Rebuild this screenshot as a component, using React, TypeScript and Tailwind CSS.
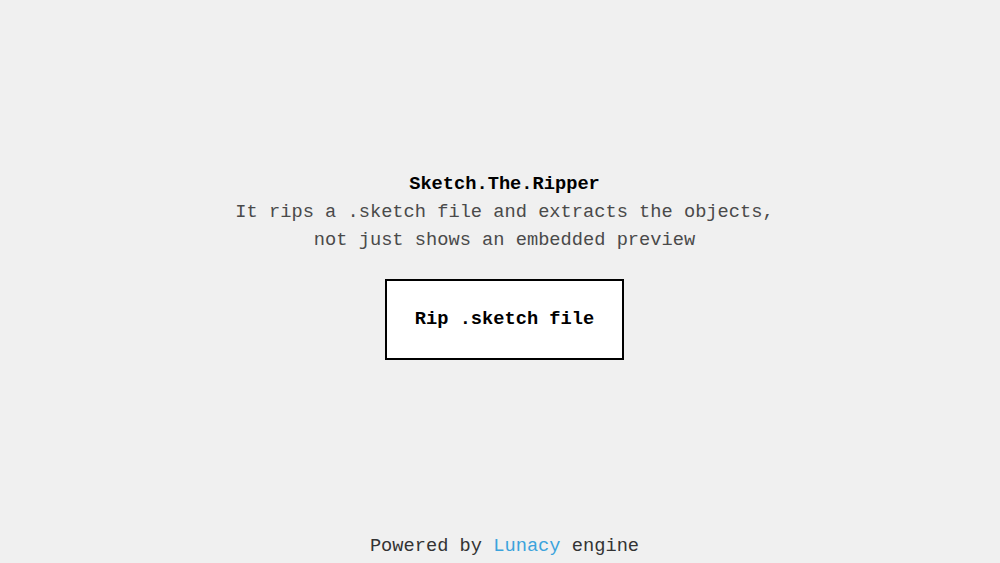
export default function App() {
  return (
    <div
      className="flex h-[563px] w-full flex-col bg-[#f0f0f0] pl-[9px] text-[18.7px] text-[#333]"
      style={{ fontFamily: '"Liberation Mono", "Courier New", monospace' }}
    >
      <main className="flex flex-1 flex-col items-center justify-center pt-[2px]">
        <h1 className="font-bold leading-[28px] text-black">Sketch.The.Ripper</h1>
        <p className="text-center leading-[28px] text-[#4a4a4a]">
          It rips a .sketch file and extracts the objects,
          <br />
          not just shows an embedded preview
        </p>
        <button className="mt-[25px] flex h-[81px] w-[239px] items-center justify-center border-2 border-black bg-white font-bold text-black">
          Rip .sketch file
        </button>
      </main>
      <footer className="flex h-[36px] items-center justify-center pt-[3px]">
        <span>
          Powered by <span className="text-[#3ba3dc]">Lunacy</span> engine
        </span>
      </footer>
    </div>
  );
}
